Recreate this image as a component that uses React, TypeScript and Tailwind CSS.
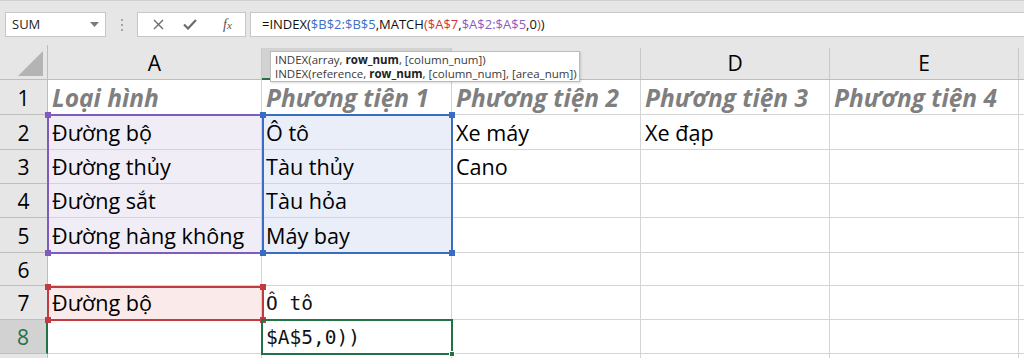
import { FC, ReactNode } from "react";

type Cell = { text?: ReactNode; fill?: string; kind?: "head" | "mono" };

const COLS = ["w-[214px]", "w-[190px]", "w-[189px]", "w-[189px]", "w-[189px]"];
// B and C letters sit under the function tooltip
const LETTERS = ["A", "", "", "D", "E"];
const HEIGHTS = ["h-[35px]", "h-[35px]", "h-[34px]", "h-[34px]", "h-[35px]", "h-[33px]", "h-[34px]", "h-[34px]"];

const PURPLE = "bg-[#f0edf6]";
const BLUE = "bg-[#e9eef8]";
const RED = "bg-[#fbeaea]";

const ROWS: Cell[][] = [
  [
    { text: "Loại hình", kind: "head" },
    { text: "Phương tiện 1", kind: "head" },
    { text: "Phương tiện 2", kind: "head" },
    { text: "Phương tiện 3", kind: "head" },
    { text: "Phương tiện 4", kind: "head" },
  ],
  [{ text: "Đường bộ", fill: PURPLE }, { text: "Ô tô", fill: BLUE }, { text: "Xe máy" }, { text: "Xe đạp" }, {}],
  [{ text: "Đường thủy", fill: PURPLE }, { text: "Tàu thủy", fill: BLUE }, { text: "Cano" }, {}, {}],
  [{ text: "Đường sắt", fill: PURPLE }, { text: "Tàu hỏa", fill: BLUE }, {}, {}, {}],
  [{ text: "Đường hàng không", fill: PURPLE }, { text: "Máy bay", fill: BLUE }, {}, {}, {}],
  [{}, {}, {}, {}, {}],
  [{ text: "Đường bộ", fill: RED }, { text: "Ô tô", kind: "mono" }, {}, {}, {}],
  [{}, { text: "$A$5,0))", kind: "mono" }, {}, {}, {}],
];

const Handle: FC<{ className: string }> = ({ className }) => (
  <div className={`absolute w-[6px] h-[6px] ${className}`} />
);

// coloured range outlines drawn over the grid
const Range: FC<{ pos: string; border: string; dot: string }> = ({ pos, border, dot }) => (
  <div className={`absolute border-2 ${border} ${pos}`}>
    <Handle className={`-left-[4px] -top-[4px] ${dot}`} />
    <Handle className={`-right-[4px] -top-[4px] ${dot}`} />
    <Handle className={`-left-[4px] -bottom-[4px] ${dot}`} />
    <Handle className={`-right-[4px] -bottom-[4px] ${dot}`} />
  </div>
);

const FormulaBar = () => (
  <div className="flex items-start h-[45px] pt-[11px] bg-[#e6e6e6] border-t border-[#d0d0d0]">
    <div className="ml-[5px] w-[101px] h-[25px] bg-white border border-[#c6c6c6] flex items-center pl-[6px] pr-[6px] text-[13px] text-[#262626]">
      <span>SUM</span>
      <svg className="ml-auto" width="9" height="5" viewBox="0 0 9 5">
        <polygon points="0,0 9,0 4.5,5" fill="#7a7a7a" />
      </svg>
    </div>
    <div className="w-[31px] h-[25px] flex flex-col items-center justify-center gap-[3px]">
      <div className="w-[2px] h-[2px] bg-[#a6a6a6]" />
      <div className="w-[2px] h-[2px] bg-[#a6a6a6]" />
      <div className="w-[2px] h-[2px] bg-[#a6a6a6]" />
    </div>
    <div className="w-[109px] h-[25px] bg-white border border-[#c6c6c6] flex items-center">
      <svg className="ml-[15px]" width="11" height="11" viewBox="0 0 11 11">
        <path d="M1 1L10 10M10 1L1 10" stroke="#6b6b6b" strokeWidth="1.4" />
      </svg>
      <svg className="ml-[19px]" width="14" height="11" viewBox="0 0 14 11">
        <path d="M1 5.5L5 9.5L13 1" stroke="#6b6b6b" strokeWidth="2.2" fill="none" />
      </svg>
      <span className="ml-[26px] font-['Liberation_Serif',serif] italic text-[14px] text-[#555]">
        f<span className="text-[11px]">x</span>
      </span>
    </div>
    <div className="ml-[4px] flex-1 h-[25px] bg-white border-y border-l border-[#c6c6c6] flex items-center pl-[11px] text-[13px] text-[#111] whitespace-nowrap">
      <span>=INDEX(</span>
      <span className="text-[#3f6fc7]">$B$2:$B$5</span>
      <span>,MATCH</span>
      <span className="text-[#d13438]">(</span>
      <span className="text-[#d13438]">$A$7</span>
      <span>,</span>
      <span className="text-[#8a5bc2]">$A$2:$A$5</span>
      <span>,0</span>
      <span className="text-[#d13438]">)</span>
      <span>)</span>
    </div>
  </div>
);

const ColumnHeader = () => (
  <div className="flex h-[35px] bg-[#e6e6e6] border-b border-[#bdbdbd] text-[21px] text-black">
    <div className="w-[48px] shrink-0 border-r border-[#bdbdbd] flex items-end justify-end pr-[4px] pb-[3px]">
      <svg width="25" height="25" viewBox="0 0 25 25">
        <polygon points="25,0 25,25 0,25" fill="#b4b4b4" />
      </svg>
    </div>
    {LETTERS.map((l, i) => (
      <div
        key={i}
        className={`${COLS[i]} shrink-0 flex items-center justify-center mt-[3px] border-r border-[#c8c8c8] ${
          i === 1 ? "bg-[#d2d2d2] border-b-2 border-b-[#217346] -mb-[1px]" : ""
        }`}
      >
        {l}
      </div>
    ))}
    <div className="flex-1" />
  </div>
);

const CellView: FC<{ cell: Cell; width: string }> = ({ cell, width }) => {
  const font =
    cell.kind === "head"
      ? "font-bold italic text-[#7f7f7f] text-[24.5px] leading-[28px] pb-[2px]"
      : cell.kind === "mono"
      ? "font-['DejaVu_Sans_Mono',monospace] text-[19.5px] leading-[26px] text-[#111] pb-[2px]"
      : "text-[21.6px] leading-[26px] text-black pb-[3px]";
  return (
    <div
      className={`${width} shrink-0 border-r border-b border-[#d4d4d4] flex items-end pl-[4px] whitespace-nowrap overflow-visible ${
        cell.fill ?? ""
      } ${font}`}
    >
      {cell.text}
    </div>
  );
};

export default function App() {
  return (
    <div className="w-[1024px] h-[358px] overflow-hidden bg-white relative font-['Open_Sans',sans-serif]">
      <FormulaBar />
      <ColumnHeader />
      <div className="relative">
        {ROWS.map((row, r) => (
          <div key={r} className={`flex ${HEIGHTS[r]}`}>
            <div
              className={`w-[48px] shrink-0 flex items-center justify-center pt-[3px] text-[21px] border-b ${
                r === 7
                  ? "bg-[#d2d2d2] text-[#217346] border-r-2 border-r-[#217346] border-b-[#bdbdbd]"
                  : "bg-[#e6e6e6] text-black border-r border-r-[#bdbdbd] border-b-[#bdbdbd]"
              }`}
            >
              {r + 1}
            </div>
            {row.map((c, i) => (
              <CellView key={i} cell={c} width={COLS[i]} />
            ))}
            <div className="flex-1 border-b border-[#d4d4d4]" />
          </div>
        ))}
        <div className="flex h-[10px]">
          <div className="w-[48px] shrink-0 bg-[#e6e6e6] border-r border-[#bdbdbd]" />
          {COLS.map((w, i) => (
            <div key={i} className={`${w} shrink-0 border-r border-[#d4d4d4]`} />
          ))}
        </div>

        <Range pos="left-[47px] top-[34px] w-[217px] h-[140px]" border="border-[#7e5bbd]" dot="bg-[#7e5bbd]" />
        <Range pos="left-[262px] top-[34px] w-[191px] h-[140px]" border="border-[#3a6cc4]" dot="bg-[#3a6cc4]" />
        <Range pos="left-[47px] top-[206px] w-[217px] h-[35px]" border="border-[#c23b3f]" dot="bg-[#c23b3f]" />
        <div className="absolute left-[261px] top-[239px] w-[192px] h-[36px] border-2 border-[#217346]">
          <div className="absolute -right-[4px] -bottom-[4px] w-[6px] h-[6px] bg-[#217346] border border-white" />
        </div>
      </div>

      {/* function argument tooltip */}
      <div className="absolute left-[270px] top-[51px] w-[310px] h-[31px] bg-white border border-[#bcbcbc] shadow-[1px_1px_2px_rgba(0,0,0,0.15)] pl-[4px] text-[11.5px] leading-[14px] text-[#3a3a3a] pt-[1px] whitespace-nowrap">
        <div>
          INDEX(array, <b className="text-[#222]">row_num</b>, [column_num])
        </div>
        <div>
          INDEX(reference, <b className="text-[#222]">row_num</b>, [column_num], [area_num])
        </div>
      </div>
    </div>
  );
}
